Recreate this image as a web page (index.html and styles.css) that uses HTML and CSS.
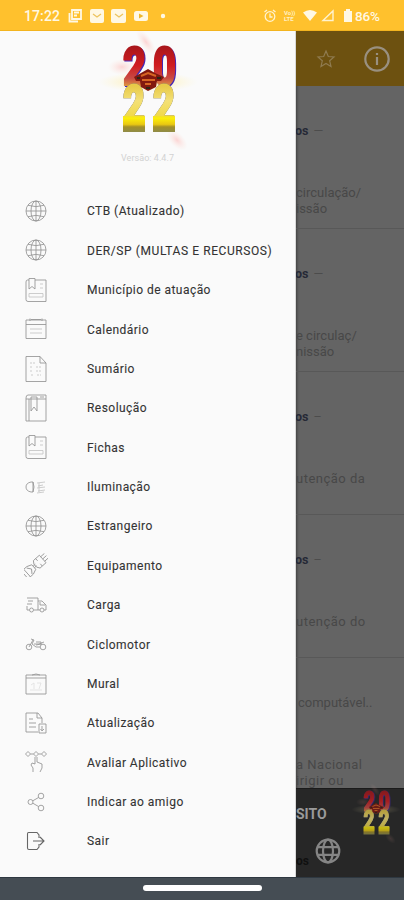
FILE: index.html
```html
<!DOCTYPE html>
<html lang="pt-BR">
<head>
<meta charset="utf-8">
<title>Menu</title>
<link rel="stylesheet" href="styles.css">
</head>
<body>
<svg class="defs" width="0" height="0">
  <defs>
    <linearGradient id="red" x1="0" y1="15" x2="0" y2="58" gradientUnits="userSpaceOnUse"><stop offset="0" stop-color="#a8161b"/><stop offset=".45" stop-color="#d01c20"/><stop offset=".75" stop-color="#c94a44"/><stop offset="1" stop-color="#e8b23c"/></linearGradient>
    <linearGradient id="gold" x1="0" y1="55" x2="0" y2="92" gradientUnits="userSpaceOnUse"><stop offset="0" stop-color="#e8ca48"/><stop offset=".4" stop-color="#f3e077"/><stop offset="1" stop-color="#efd636"/></linearGradient>
    <linearGradient id="base" x1="0" y1="84" x2="0" y2="101" gradientUnits="userSpaceOnUse"><stop offset="0" stop-color="#f0da38"/><stop offset=".2" stop-color="#fbee08"/><stop offset=".55" stop-color="#e9c812"/><stop offset=".7" stop-color="#a38f28"/><stop offset="1" stop-color="#8f8c48"/></linearGradient>
    <radialGradient id="glow"><stop offset="0" stop-color="#ffe98a" stop-opacity=".85"/><stop offset="1" stop-color="#fff3c0" stop-opacity="0"/></radialGradient>
    <radialGradient id="pink"><stop offset="0" stop-color="#ff9c9c" stop-opacity=".4"/><stop offset="1" stop-color="#ffd0c0" stop-opacity="0"/></radialGradient>
  </defs>
  <symbol id="rays" viewBox="0 0 100 120">
    <ellipse cx="50" cy="51" rx="50" ry="10" fill="url(#glow)"/>
    <ellipse cx="48" cy="11" rx="15" ry="6" fill="url(#pink)" transform="rotate(55 48 11)"/>
    <ellipse cx="24" cy="36" rx="14" ry="8" fill="url(#pink)"/>
    <ellipse cx="79" cy="109" rx="13" ry="7" fill="url(#pink)" transform="rotate(45 79 109)"/>
  </symbol>
  <symbol id="emblem" viewBox="0 0 100 120">
    <path d="M25 85H47V101H25ZM55 85H77V101H55Z" fill="url(#base)"/>
    <path d="M36 46L43 42L50 38L57 42L66 46L63 50H59L58 56L50 60L43 56L42 50H38Z" fill="#82180f"/>
    <path d="M43 45L50 42L58 45M44 49H57M47 53H53" fill="none" stroke="#d66524" stroke-width="2"/>
    <path d="M39 47H42M59 47H63M48 57H52" stroke="#302617" stroke-width="2"/>
  </symbol>
  <symbol id="globe" viewBox="0 0 24 24"><circle cx="12" cy="12" r="10"/><ellipse cx="12" cy="12" rx="5" ry="10"/><path d="M12 2V22M2 12H22M4 6.3Q12 9 20 6.3M4 17.7Q12 15 20 17.7"/></symbol>
  <symbol id="book" viewBox="0 0 24 24"><path d="M5 2H3.5Q2 2 2 4V21.5Q2 23.500 4 23.500H22V2H11"/><path d="M5 .5H11V11L8 8.500L5 11Z"/><path class="soft" d="M16 6H19M16 10H19M5 15.500H19V19H5Z"/></symbol>
  <symbol id="calendar" viewBox="0 0 24 24"><path d="M2 3H22V21.500H2ZM2 7.500H22"/><path d="M6 1.500V4M18 1.500V4M7 2.500H17"/><path class="soft" d="M6 12H18M6 16H18"/></symbol>
  <symbol id="sheet" viewBox="0 0 24 26"><path d="M2 .5H16L22 7V25.500H2ZM16 .5V7H22"/><path class="soft" d="M6 7H11M6 11H9M12 11H17M6 15H9M12 15H17M7 19H10M13 19H17" stroke-dasharray="2 1"/></symbol>
  <symbol id="notebook" viewBox="0 0 24 28"><path d="M2 4Q2 1 4 1H22V27H2ZM2 5H22M5 5V27"/><path d="M7 3H13V17L10 13L7 17ZM16 3H20"/></symbol>
  <symbol id="light" viewBox="0 0 24 24"><path d="M9 7H7Q2 8 2 12T7 17H9ZM9 7Q11 12 9 17"/><path class="soft" d="M13 8L21 7M14 11L19 10M13 13L21 12M14 16L21 15M13 18L20 17M15 8V17"/></symbol>
  <symbol id="belt" viewBox="0 0 24 24"><g transform="rotate(-42 12 12)"><path d="M-3 8L0 7H4L9 9V15L4 17H0L-3 16ZM0 7V17M3 8L6 12L3 16M9 11H12M9 13H12M13 7H21V17H13L11 14V10ZM21 9H26M21 12H26M21 15H26M16 7V10M16 14V17"/></g></symbol>
  <symbol id="truck" viewBox="0 0 24 24"><path d="M3 5H14V17H10M5 17H3V13M14 8H18L22 12V17H20M16 17H14M16 9V12H21M4 8H9M3 11H8"/><circle cx="7.500" cy="17" r="2"/><circle cx="18" cy="17" r="2"/></symbol>
  <symbol id="moto" viewBox="0 0 24 24"><circle cx="5" cy="15" r="2.800"/><circle cx="19" cy="15" r="2.800"/><path d="M5 15L9 8M7 7L10 8L8 12L12 15H16M10 12H15L20 10M12 10H17V13M12 13L17 12"/></symbol>
  <symbol id="board" viewBox="0 0 24 24"><path d="M2 3H22V22H2ZM2 6H22M8 3Q12 1 16 3"/><path class="faint" d="M7 13L10 11V17M13 11H17L15 17M6 18H18"/></symbol>
  <symbol id="update" viewBox="0 0 24 24"><path d="M14 21H2V2H14L18 7V12M13 2V7H18M5 8H9M5 12H12M5 16H12M15 13H22V22H15ZM18 15V19M16.500 18L18 20L20 18"/></symbol>
  <symbol id="rate" viewBox="0 0 24 24"><path d="M4 1.500L6.500 4L4 6.500L1.500 4ZM12 1.500L14.500 4L12 6.500L9.500 4ZM20 1.500L22.500 4L20 6.500L17.500 4ZM6.500 4H9.500M14.500 4H17.500M11 7V14M13 7V12L18 14V18L16 22M11 14L8 13L7 15L9 18V22"/></symbol>
  <symbol id="share" viewBox="0 0 24 24"><circle cx="6.500" cy="12" r="2.500"/><circle cx="17" cy="6" r="2.800"/><circle cx="17" cy="18" r="2.800"/><path d="M9 10.700L14.500 7.500M9 13.300L14.500 16.500"/></symbol>
  <symbol id="exit" viewBox="0 0 24 24"><path d="M15 9V6L13 3.500H4.500Q3.500 3.500 3.500 5V19Q3.500 20.500 5 20.500H13L15 18V15M9 12H20M16 8L20 12L16 16"/></symbol>
</svg>

<div class="phone">
  <header class="status">
    <span class="time">17:22</span>
    <svg class="status-left" viewBox="0 0 100 16">
      <path d="M4 2H13V11H4ZM1.500 5V13.500H10" fill="none" stroke="#fff8e4" stroke-width="1.800"/><path d="M6 4.500H11M6 7.500H9" stroke="#fff8e4" stroke-width="1.800"/>
      <rect x="22" y="1" width="14" height="14" rx="2" fill="#fff8e4"/><path d="M25 6L29 9L33 6" fill="none" stroke="#edc45e" stroke-width="1.300"/>
      <rect x="43" y="1" width="15" height="14" rx="2" fill="#fff8e4"/><path d="M47 6L51 9L55 6" fill="none" stroke="#edc45e" stroke-width="1.300"/>
      <rect x="66" y="3" width="14" height="10" rx="2.500" fill="#fff8e4"/><path d="M71 5.500L75.500 8L71 10.500Z" fill="#eeb72e"/>
      <circle cx="95" cy="8" r="2.200" fill="#fff8e4"/>
    </svg>
    <span class="grow"></span>
    <svg class="status-right" viewBox="0 0 92 16">
      <g fill="none" stroke="#fff3cf" stroke-width="1.300"><circle cx="7" cy="8.500" r="4.800"/><path d="M7 5.500V9H9.500M1.500 4L4 2M12.500 4L10 2"/></g>
      <g class="volte"><text x="21" y="7">Vo))</text><text x="21" y="13">LTE</text></g>
      <path d="M40 4.500Q47 -.5 54 4.500L47 13Z" fill="#fff8e4"/>
      <path d="M60 12.500L70 3V12.500Z" fill="none" stroke="#fff3cf" stroke-width="1.400"/>
      <path d="M83 1H87V3H89V14H81V3H83Z" fill="#fff8e4"/>
    </svg>
    <span class="battery">86%</span>
  </header>

  <div class="screen">
    <nav class="drawer">
      <div class="brand">
        <svg class="brand-logo" viewBox="0 0 100 120">
          <use href="#rays"/>
          <g class="digits">
            <g class="red"><text x="25" y="54" textLength="23" lengthAdjust="spacingAndGlyphs">2</text><text x="55" y="54" textLength="23" lengthAdjust="spacingAndGlyphs">0</text></g>
            <g class="gold"><text x="25" y="92" textLength="22" lengthAdjust="spacingAndGlyphs">2</text><text x="55" y="92" textLength="22" lengthAdjust="spacingAndGlyphs">2</text></g>
          </g>
          <use href="#emblem"/>
        </svg>
        <div class="version">Versão: 4.4.7</div>
      </div>
      <ul class="menu">
        <li><svg class="icon"><use href="#globe"/></svg><span>CTB (Atualizado)</span></li>
        <li><svg class="icon"><use href="#globe"/></svg><span class="caps">DER/SP (MULTAS E RECURSOS)</span></li>
        <li><svg class="icon"><use href="#book"/></svg><span>Município de atuação</span></li>
        <li><svg class="icon"><use href="#calendar"/></svg><span>Calendário</span></li>
        <li><svg class="icon tall"><use href="#sheet"/></svg><span>Sumário</span></li>
        <li><svg class="icon taller"><use href="#notebook"/></svg><span>Resolução</span></li>
        <li><svg class="icon"><use href="#book"/></svg><span>Fichas</span></li>
        <li><svg class="icon"><use href="#light"/></svg><span>Iluminação</span></li>
        <li><svg class="icon"><use href="#globe"/></svg><span>Estrangeiro</span></li>
        <li><svg class="icon"><use href="#belt"/></svg><span>Equipamento</span></li>
        <li><svg class="icon"><use href="#truck"/></svg><span>Carga</span></li>
        <li><svg class="icon"><use href="#moto"/></svg><span>Ciclomotor</span></li>
        <li><svg class="icon"><use href="#board"/></svg><span>Mural</span></li>
        <li><svg class="icon"><use href="#update"/></svg><span>Atualização</span></li>
        <li><svg class="icon"><use href="#rate"/></svg><span>Avaliar Aplicativo</span></li>
        <li><svg class="icon"><use href="#share"/></svg><span>Indicar ao amigo</span></li>
        <li><svg class="icon dark"><use href="#exit"/></svg><span>Sair</span></li>
      </ul>
    </nav>

    <main class="page">
      <div class="appbar">
        <svg class="star" viewBox="0 0 20 20"><path d="M10 2L12.300 7.500L18 8L13.700 11.800L15 17.500L10 14.500L5 17.500L6.300 11.800L2 8L7.700 7.500Z"/></svg>
        <svg class="info" viewBox="0 0 28 28"><circle cx="14" cy="14" r="11.700"/><path d="M14 12V20M14 8V10"/></svg>
      </div>
      <section class="card"><h2>os <i>—</i></h2><p>circulação/<br>issão</p></section>
      <section class="card"><h2>os <i>—</i></h2><p>e circulaç/<br>nissão</p></section>
      <section class="card"><h2>os <i>–</i></h2><p class="wide">utenção da</p></section>
      <section class="card"><h2>os <i>–</i></h2><p class="wide">utenção do</p></section>
      <section class="last"><p class="first-line">computável..</p><p class="wide">a Nacional<br>irigir ou</p></section>
      <footer class="bottom">
        <div class="bottom-top"><b>SITO</b>
          <svg class="small-logo" viewBox="0 0 100 120">
            <use href="#rays" opacity=".4"/>
            <g class="digits">
              <g class="red"><text x="25" y="54" textLength="23" lengthAdjust="spacingAndGlyphs">2</text><text x="55" y="54" textLength="23" lengthAdjust="spacingAndGlyphs">0</text></g>
              <g class="gold"><text x="25" y="92" textLength="22" lengthAdjust="spacingAndGlyphs">2</text><text x="55" y="92" textLength="22" lengthAdjust="spacingAndGlyphs">2</text></g>
            </g>
            <use href="#emblem"/>
          </svg>
        </div>
        <div class="bottom-tab"><span>os</span><svg class="tab-globe" viewBox="0 0 26 26"><circle cx="13" cy="13" r="11.300"/><ellipse cx="13" cy="13" rx="5" ry="11.300"/><path d="M2 9.200H24M2 16.800H24"/></svg></div>
      </footer>
    </main>
  </div>
  <div class="gesture"><span></span></div>
</div>
</body>
</html>
```
FILE: styles.css
```css
* { box-sizing: border-box; }
body { margin: 0; font-family: Roboto, "Liberation Sans", sans-serif; background: #fafafa; }
.defs { position: absolute; }
.phone { width: 404px; height: 900px; display: flex; flex-direction: column; overflow: hidden; }

.status { height: 31px; flex: none; display: flex; align-items: center; padding: 2px 22px 0 24px; background: #ffc12d; color: #fff8e4; border-bottom: 1px solid #f3b41f; }
.time { font-size: 14px; font-weight: 500; width: 44px; letter-spacing: .1px; }
.status-left { width: 100px; height: 16px; }
.grow { flex: 1; }
.status-right { width: 92px; height: 16px; flex: none; }
.volte { font: 700 6px Roboto, sans-serif; fill: #fff0c4; }
.battery { font-size: 13.500px; font-weight: 500; letter-spacing: -.2px; width: 27px; }

.screen { height: 846px; flex: none; display: flex; }
.drawer { width: 296px; flex: none; background: #fafafa; border-right: 1px solid #d8d8d8; }
.brand { height: 160.400px; display: flex; flex-direction: column; align-items: center; }
.brand-logo { width: 100px; height: 120px; margin-left: 1px; }
.version { font-size: 9px; line-height: 12px; color: #d2d2d2; letter-spacing: .05px; margin-top: 1px; }
.menu { list-style: none; margin: 0; padding: 0; }
.menu li { height: 39.380px; display: flex; align-items: center; padding-left: 24px; gap: 39px; font-size: 12px; color: #333; letter-spacing: .46px; white-space: nowrap; }
.menu span { padding-top: .6px; -webkit-text-stroke: .1px #333; }
.menu .caps { font-size: 12px; letter-spacing: .58px; }
.icon { width: 24px; height: 24px; flex: none; overflow: visible; fill: none; stroke: #949494; stroke-width: .85px; }
.icon.tall { height: 26px; }
.icon.taller { height: 28px; }
.icon.dark { stroke: #666; stroke-width: 1.100px; }
.soft { stroke: #c4c4c4; }
.faint { stroke: #e0e0e0; }

.digits { font: 900 54px Roboto, sans-serif; }
.red { fill: url(#red); stroke: url(#red); stroke-width: 2.200px; filter: drop-shadow(1px 1px 0 #4527b6); }
.gold { fill: url(#gold); stroke: url(#gold); stroke-width: 2px; filter: drop-shadow(.8px 0 0 #565a86); }

.page { flex: 1; min-width: 0; overflow: hidden; background: #646464; box-shadow: inset 3px 0 3px -2px #3f3f3f; display: flex; flex-direction: column; }
.appbar { height: 55px; flex: none; display: flex; align-items: center; padding-left: 20px; gap: 27px; background: #6d5110; }
.star { width: 20px; height: 20px; fill: none; stroke: #8f7b50; stroke-width: 1.200px; }
.info { width: 28px; height: 28px; fill: none; stroke: #999080; stroke-width: 2.200px; }
.card { height: 143px; flex: none; padding-top: 37px; border-bottom: 1px solid #585858; }
.card h2 { margin: 0; height: 62px; line-height: 16px; font-size: 12.500px; font-weight: 700; color: #262936; margin-left: -1px; }
.card h2 i { font-style: normal; font-weight: 400; color: #4c4c4c; margin-left: 2px; }
.page p { margin: 0; font-size: 13px; line-height: 16px; color: #484848; letter-spacing: 0; white-space: nowrap; }
.page .wide { letter-spacing: .5px; }
.last { height: 130px; flex: none; padding-top: 37px; }
.last .first-line { height: 62px; padding-left: 2px; }
.bottom { height: 89px; flex: none; background: #272727; border-top: 1px solid #1b1b1b; }
.bottom-top { height: 49px; display: flex; align-items: center; gap: 24px; color: #9a9a9a; font-size: 14px; }
.bottom-top b { width: 31px; }
.small-logo { width: 50px; height: 60px; opacity: .75; flex: none; }
.bottom-tab { height: 39px; display: flex; align-items: flex-start; gap: 5px; }
.bottom-tab span { width: 14px; padding-top: 16px; font-size: 12px; font-weight: 700; color: #101010; }
.tab-globe { width: 26px; height: 26px; fill: none; stroke: #858585; stroke-width: 2.200px; }

.gesture { height: 23px; flex: none; background: #454d54; border-top: 1px solid #2e3841; display: flex; justify-content: center; padding-top: 7px; }
.gesture span { width: 119px; height: 6px; border-radius: 3px; background: #fff; }
```
